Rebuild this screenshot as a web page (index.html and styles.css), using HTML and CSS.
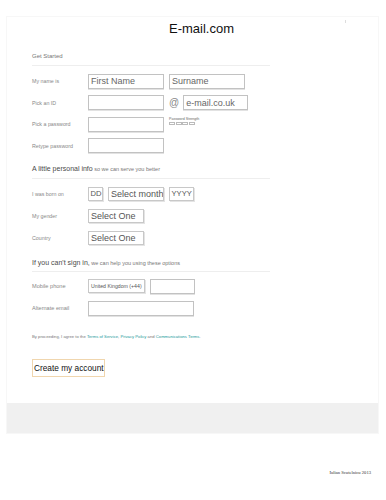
FILE: index.html
```html
<!DOCTYPE html>
<html>
<head>
<meta charset="utf-8">
<title>E-mail.com</title>
<link rel="stylesheet" href="styles.css">
</head>
<body>
<div class="card">
  <header class="header">
    <h1 class="title">E-mail.com</h1>
    <span class="mark"></span>
  </header>
  <div class="form">
    <h2 class="sec sec-first">Get Started</h2>
    <div class="rows">
      <div class="row"><span class="label">My name is</span><span class="field w76">First Name</span><span class="field w76">Surname</span></div>
      <div class="row"><span class="label">Pick an ID</span><span class="field w76"></span><span class="at">@</span><span class="field w65">e-mail.co.uk</span></div>
      <div class="row row-top"><span class="label">Pick a password</span><span class="field w76"></span>
        <div class="strength"><span class="strength-text">Password Strength</span><div class="bars"><i></i><i></i><i></i><i></i></div></div>
      </div>
      <div class="row"><span class="label">Retype password</span><span class="field w76"></span></div>
    </div>

    <h2 class="sec"><span class="sec-main">A little personal info</span> <span class="sec-sub">so we can serve you better</span></h2>
    <div class="rows rows-wide">
      <div class="row"><span class="label">I was born on</span><span class="field sel small w15">DD</span><span class="field sel w56">Select month</span><span class="field sel small w25">YYYY</span></div>
      <div class="row"><span class="label">My gender</span><span class="field sel w56">Select One</span></div>
      <div class="row"><span class="label">Country</span><span class="field sel w56">Select One</span></div>
    </div>

    <h2 class="sec sec-third"><span class="sec-main">If you can't sign in,</span> <span class="sec-sub">we can help you using these options</span></h2>
    <div class="rows rows-wide rows-last">
      <div class="row"><span class="label lbl-big">Mobile phone</span><span class="field sel tiny w57">United Kingdom (+44)</span><span class="field w45"></span></div>
      <div class="row"><span class="label lbl-big">Alternate email</span><span class="field w106"></span></div>
    </div>

    <p class="terms">By proceeding, I agree to the <a href="#">Terms of Service</a>, <a href="#">Privacy Policy</a> and <a href="#">Communications Terms</a>.</p>

    <button class="create" type="button">Create my account</button>
  </div>
  <div class="band"></div>
</div>
<footer class="footer">Iulian Scutelnicu 2013</footer>
</body>
</html>
```

FILE: styles.css
```css
* { box-sizing: border-box; }

body {
  margin: 0;
  padding: 16px 7px 0 6px;
  background: #fff;
  font-family: "Liberation Sans", Arial, sans-serif;
  color: #666;
}

.card {
  width: 373px;
  border: 1px solid #f7f7f7;
  background: #fff;
}

.header {
  position: relative;
  height: 32px;
  padding: 4px 0 0 18px;
  display: flex;
  justify-content: center;
}

.title {
  margin: 0;
  font-size: 13px;
  line-height: 15px;
  font-weight: normal;
  color: #111;
}

.mark {
  position: absolute;
  left: 338px;
  top: 3px;
  width: 1px;
  height: 3px;
  background: #ddd;
}

.form {
  padding: 0 0 26px 25px;
}

.sec {
  margin: 11px 0 0;
  width: 238px;
  padding-bottom: 3.5px;
  border-bottom: 1.5px solid #eee;
  font-size: 5.5px;
  line-height: 10px;
  font-weight: normal;
  color: #777;
}

.sec-first {
  margin-top: 2px;
  padding-bottom: 4px;
  font-size: 6px;
  color: #777;
}

.sec-third { margin-top: 12.5px; }

.sec-main {
  font-size: 7px;
  color: #4a4a4a;
}

.sec-sub {
  font-size: 5.5px;
  color: #777;
}

.rows {
  display: flex;
  flex-direction: column;
  gap: 6.5px;
  margin-top: 7.5px;
}

.rows-wide { gap: 7px; }
.rows-last { margin-top: 6.5px; }

.row {
  display: flex;
  align-items: center;
  gap: 5px;
  height: 15px;
}

.row-top { align-items: flex-start; }

.label {
  width: 51px;
  font-size: 5.3px;
  color: #888;
  align-self: center;
}

.lbl-big { font-size: 5.6px; }

.field {
  display: flex;
  align-items: center;
  height: 15px;
  padding: 0 2px;
  border: 1px solid #c2c2c2;
  box-shadow: 0 1px 0 #e2e2e2;
  background: #fff;
  font-size: 9px;
  color: #666;
  white-space: nowrap;
  overflow: hidden;
}

.sel {
  height: 14px;
  border-color: #c8c8c8;
  box-shadow: 1px 1px 0 #e4e4e4;
  color: #555;
}

.small { font-size: 7.6px; padding: 0 1.5px; }
.tiny { font-size: 5.2px; padding: 0 2px; }

.w15 { width: 15px; }
.w25 { width: 25px; }
.w45 { width: 45px; }
.w56 { width: 56px; }
.w57 { width: 57px; }
.w65 { width: 65px; }
.w76 { width: 76px; }
.w106 { width: 106px; }

.at {
  font-size: 10px;
  color: #888;
  margin-right: -1px;
}

.strength {
  display: flex;
  flex-direction: column;
  padding-top: 0;
}

.strength-text {
  font-size: 3.6px;
  line-height: 5px;
  color: #666;
}

.bars {
  display: flex;
  gap: 0.5px;
  margin-top: 0.5px;
}

.bars i {
  display: block;
  width: 6px;
  height: 2.5px;
  border: 0.5px solid #bbb;
}

.terms {
  margin: 17.5px 0 0;
  font-size: 4.2px;
  line-height: 8px;
  color: #777;
}

.terms a {
  color: #1e9a9a;
  text-decoration: none;
}

.create {
  display: flex;
  align-items: center;
  margin-top: 18px;
  width: 73px;
  height: 18px;
  padding: 0 0 0 1px;
  border: 1px solid #f0d6ae;
  background: #fff;
  font-family: "Liberation Sans", Arial, sans-serif;
  font-size: 8.3px;
  color: #111;
  white-space: nowrap;
  overflow: hidden;
}

.band {
  height: 30px;
  background: #f0f0f0;
}

.footer {
  margin-top: 35px;
  padding-right: 8px;
  text-align: right;
  font-family: "Liberation Serif", "Times New Roman", serif;
  font-size: 4.6px;
  line-height: 8px;
  color: #333;
}
```
